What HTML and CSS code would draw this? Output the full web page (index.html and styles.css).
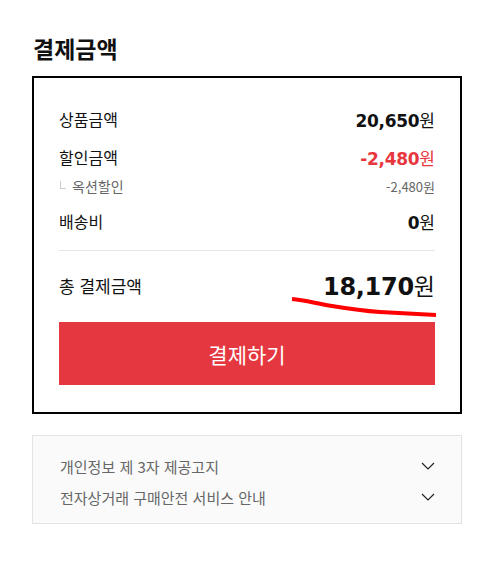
FILE: index.html
```html
<!DOCTYPE html>
<html lang="ko">
<head>
<meta charset="utf-8">
<link rel="stylesheet" href="styles.css">
</head>
<body>
<div class="page">
  <h2 class="title">결제금액</h2>
  <section class="summary">
    <div class="row">
      <span class="label">상품금액</span>
      <span class="value"><b>20,650</b>원</span>
    </div>
    <div class="row row-gap">
      <span class="label">할인금액</span>
      <span class="value discount"><b>-2,480</b>원</span>
    </div>
    <div class="sub-row">
      <span class="sub-label"><i class="corner"></i>옥션할인</span>
      <span class="sub-value">-2,480원</span>
    </div>
    <div class="row row-gap">
      <span class="label">배송비</span>
      <span class="value"><b>0</b>원</span>
    </div>
    <div class="divider"></div>
    <div class="total-row">
      <span class="label total-label">총 결제금액</span>
      <span class="total-value"><b>18,170</b>원</span>
    </div>
    <button class="pay-btn" type="button">결제하기</button>
  </section>
  <section class="notices">
    <div class="notice">
      <span>개인정보 제 3자 제공고지</span>
      <svg class="chev" width="14" height="8" viewBox="0 0 14 8"><path d="M1 1 L7 7 L13 1" fill="none" stroke="#222" stroke-width="1.2"/></svg>
    </div>
    <div class="notice">
      <span>전자상거래 구매안전 서비스 안내</span>
      <svg class="chev" width="14" height="8" viewBox="0 0 14 8"><path d="M1 1 L7 7 L13 1" fill="none" stroke="#222" stroke-width="1.2"/></svg>
    </div>
  </section>
</div>
<svg class="scribble" width="490" height="571" viewBox="0 0 490 571"><path d="M292 299 C305 300 318 304 332 306 C350 309 365 311 380 312 C400 313 420 314 436 315" fill="none" stroke="#ff0000" stroke-width="4" stroke-linecap="butt"/></svg>
</body>
</html>
```

FILE: styles.css
```css
* { box-sizing: border-box; }
html, body { margin: 0; padding: 0; background: #fff; }
body {
  font-family: "Noto Sans CJK KR", "Noto Sans", sans-serif;
  color: #111;
  position: relative;
  width: 490px;
  height: 571px;
  overflow: hidden;
}
.page { padding: 34px 28px 0 32px; }
.title {
  margin: 0 0 14px 1px;
  font-size: 23px;
  line-height: 28px;
  font-weight: 700;
  color: #111;
}
.summary {
  border: 2px solid #000;
  padding: 28px 25px 27px 25px;
}
.row, .total-row, .sub-row {
  display: flex;
  justify-content: space-between;
  align-items: center;
}
.row { height: 26px; }
.row-gap { margin-top: 12px; }
.label { font-size: 16px; color: #111; }
.total-label { font-size: 17px; }
.value { font-size: 17px; color: #111; }
.value b { font-family: "DejaVu Sans", sans-serif; font-weight: 700; font-size: 17px; letter-spacing: -0.3px; }
.discount { color: #e8363f; }
.sub-row { height: 20px; margin-top: 6px; }
.sub-label { font-size: 14px; color: #666; display: flex; align-items: center; }
.corner {
  display: inline-block;
  width: 6px;
  height: 8px;
  border-left: 1px solid #ccc;
  border-bottom: 1px solid #ccc;
  margin: 0 6px 0 1px;
  position: relative;
  top: -1px;
}
.sub-value { font-size: 13px; color: #666; }
.divider { height: 1px; background: #e6e6e6; margin-top: 16px; }
.total-row { height: 34px; margin-top: 17px; }
.total-value { font-size: 23px; color: #111; }
.total-value b { font-family: "DejaVu Sans", sans-serif; font-weight: 700; font-size: 24px; letter-spacing: -0.3px; }
.pay-btn {
  display: block;
  width: 100%;
  height: 63px;
  margin-top: 20px;
  border: 0;
  background: #e53740;
  color: #fff;
  font-family: "Noto Sans CJK KR", sans-serif;
  font-size: 21px;
  cursor: pointer;
}
.notices {
  margin-top: 21px;
  border: 1px solid #e3e3e3;
  background: #fafafa;
  padding: 19px 26px 15px 27px;
}
.notice {
  display: flex;
  justify-content: space-between;
  align-items: center;
  height: 22px;
  font-size: 15px;
  color: #666;
}
.notice + .notice { margin-top: 9px; }
.scribble { position: absolute; left: 0; top: 0; pointer-events: none; }
```
